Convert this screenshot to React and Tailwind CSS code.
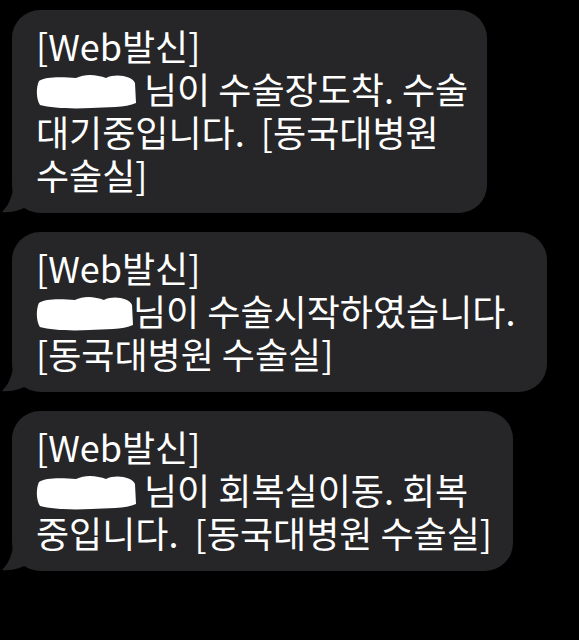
const font = { fontFamily: '"Noto Sans CJK KR", "Noto Sans", sans-serif' };

function Tail() {
  return (
    <svg className="absolute left-[-12px] bottom-0" width="44" height="38" viewBox="0 0 44 38">
      <path d="M14 0 C14 18 10 29 2 37 C12 38 22 35 29 30 C33 33 38 36 44 38 L44 0 Z" fill="#262628" />
    </svg>
  );
}

function Blob({ w = 100, h = 36, gap = true }) {
  return (
    <span className={'inline-block align-middle ' + (gap ? 'mr-[8px]' : 'mr-0')}>
      <svg width={w} height={h} viewBox="0 0 100 36" preserveAspectRatio="none" className="block -mt-[6px]">
        <path d="M3 8 C10 3 28 4 40 5 C50 0 62 2 70 5 C80 0 96 3 99 10 L100 30 C90 35 70 34 55 35 C35 36 15 35 4 32 C0 26 0 14 3 8 Z" fill="#fff" />
      </svg>
    </span>
  );
}

function Bubble({ width, children }) {
  return (
    <div className={'relative bg-[#262628] rounded-[28px] pl-[24px] pt-[14px] pb-[17px] ' + width}>
      <Tail />
      <div className="relative text-white text-[36px] leading-[43px] font-normal whitespace-nowrap" style={font}>
        {children}
      </div>
    </div>
  );
}

export default function App() {
  return (
    <div className="w-[579px] h-[640px] bg-black pt-[10px] pl-[12px] flex flex-col gap-[19px] overflow-hidden">
      <Bubble width="w-[475px]">
        <div>[Web발신]</div>
        <div><Blob />님이 수술장도착. 수술</div>
        <div>대기중입니다.&nbsp; [동국대병원</div>
        <div>수술실]</div>
      </Bubble>
      <Bubble width="w-[535px]">
        <div>[Web발신]</div>
        <div><Blob w={97} gap={false} />님이 수술시작하였습니다.</div>
        <div>[동국대병원 수술실]</div>
      </Bubble>
      <Bubble width="w-[501px]">
        <div>[Web발신]</div>
        <div><Blob />님이 회복실이동. 회복</div>
        <div>중입니다.&nbsp; [동국대병원 수술실]</div>
      </Bubble>
    </div>
  );
}
